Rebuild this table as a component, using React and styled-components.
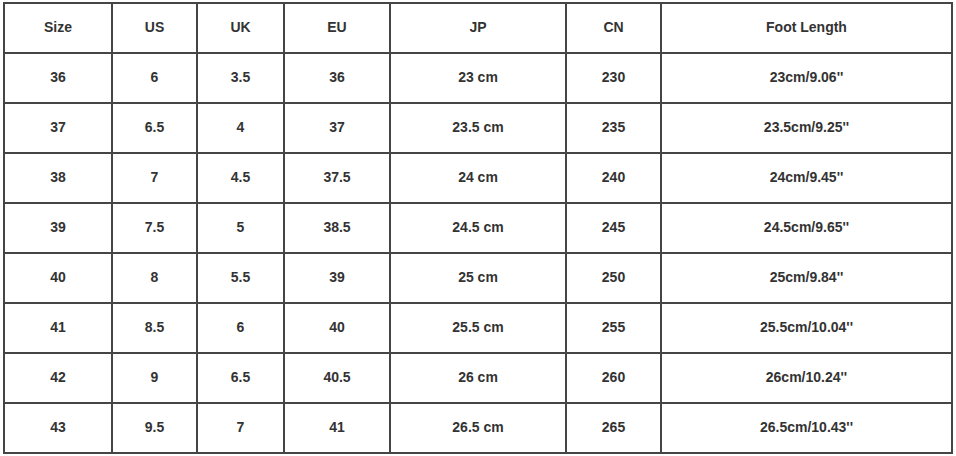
import React from "react";
import styled, { createGlobalStyle } from "styled-components";

const Global = createGlobalStyle`
  html, body { margin: 0; padding: 0; background: #ffffff; }
  body { font-family: "Liberation Sans", Arial, sans-serif; }
`;

const Page = styled.div`
  padding: 2px 0 0 3px;
`;

const Grid = styled.div`
  display: grid;
  grid-template-columns: 106px 83px 85px 104px 174px 93px 289px;
  grid-auto-rows: 48px;
  gap: 2px;
  padding: 2px;
  width: max-content;
  background: #454545;
`;

const Cell = styled.div`
  background: #ffffff;
  display: flex;
  align-items: center;
  justify-content: center;
  padding-bottom: 3px;
  box-sizing: border-box;
  font-size: 14px;
  font-weight: ${(p) => (p.$head ? 700 : 700)};
  color: #333333;
  white-space: nowrap;
`;

const head = ["Size", "US", "UK", "EU", "JP", "CN", "Foot Length"];
const rows = [
  ["36", "6", "3.5", "36", "23 cm", "230", "23cm/9.06''"],
  ["37", "6.5", "4", "37", "23.5 cm", "235", "23.5cm/9.25''"],
  ["38", "7", "4.5", "37.5", "24 cm", "240", "24cm/9.45''"],
  ["39", "7.5", "5", "38.5", "24.5 cm", "245", "24.5cm/9.65''"],
  ["40", "8", "5.5", "39", "25 cm", "250", "25cm/9.84''"],
  ["41", "8.5", "6", "40", "25.5 cm", "255", "25.5cm/10.04''"],
  ["42", "9", "6.5", "40.5", "26 cm", "260", "26cm/10.24''"],
  ["43", "9.5", "7", "41", "26.5 cm", "265", "26.5cm/10.43''"],
];

export default function App() {
  return (
    <>
      <Global />
      <Page>
        <Grid>
          {head.map((h) => (
            <Cell key={h} $head>
              {h}
            </Cell>
          ))}
          {rows.map((r, i) =>
            r.map((c, j) => <Cell key={i + "-" + j}>{c}</Cell>)
          )}
        </Grid>
      </Page>
    </>
  );
}
